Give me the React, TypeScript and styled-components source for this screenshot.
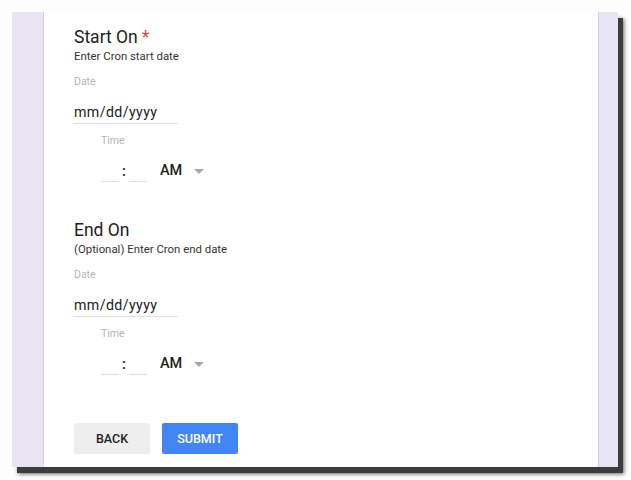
import React from "react";
import styled, { createGlobalStyle } from "styled-components";

const GlobalStyle = createGlobalStyle`
  body {
    margin: 0;
    background: #fdfdfd;
    font-family: Roboto, "Liberation Sans", Arial, sans-serif;
  }
`;

const Page = styled.div`
  min-height: 480px;
  box-sizing: border-box;
  padding: 12px 0 0 12px;
`;

const Frame = styled.div`
  width: 606px;
  height: 455px;
  box-sizing: border-box;
  padding: 0 19px 0 31px;
  background: #e9e4f4;
  box-shadow: 5px 6px 0 #3c3c3c, 6px 7px 4px rgba(0, 0, 0, 0.6);
  display: flex;
`;

const Card = styled.div`
  flex: 1;
  background: #ffffff;
  border-left: 1px solid #d3cddf;
  border-right: 1px solid #d3cddf;
  padding: 14px 0 0 30px;
  display: flex;
  flex-direction: column;
`;

const Section = styled.section<{ $first?: boolean }>`
  margin-top: ${(p) => (p.$first ? "0" : "37px")};
  display: flex;
  flex-direction: column;
  align-items: flex-start;
`;

const Title = styled.h2`
  margin: 0;
  font-size: 17.5px;
  line-height: 22px;
  font-weight: 400;
  color: #212121;
`;

const Required = styled.span`
  color: #db4437;
  margin-left: 4px;
`;

const Subtitle = styled.div`
  font-size: 11.4px;
  line-height: 16px;
  color: #333;
`;

const Label = styled.div<{ $indent?: boolean }>`
  margin-top: ${(p) => (p.$indent ? "10px" : "11px")};
  margin-left: ${(p) => (p.$indent ? "27px" : "0")};
  font-size: 10.5px;
  line-height: 14px;
  color: #b5b5b5;
`;

const DateField = styled.div`
  margin-top: 13px;
  width: 104px;
  font-size: 14.2px;
  line-height: 20px;
  color: #222;
  letter-spacing: 0.4px;
  padding-bottom: 1px;
  border-bottom: 1px solid #e0e0e0;
`;

const TimeRow = styled.div`
  margin-top: 13px;
  margin-left: 27px;
  display: flex;
  align-items: flex-start;
  height: 21px;
`;

const TimeBox = styled.div`
  width: 18px;
  height: 20px;
  border-bottom: 1px solid #e0e0e0;
`;

const Colon = styled.span`
  width: 10px;
  text-align: center;
  font-size: 15px;
  line-height: 20px;
  font-weight: 500;
  color: #222;
`;

const Meridiem = styled.span`
  margin-left: 13px;
  font-size: 14.5px;
  line-height: 20px;
  font-weight: 500;
  color: #222;
`;

const Caret = styled.span`
  margin-left: 12px;
  margin-top: 8px;
  width: 0;
  height: 0;
  border-left: 5px solid transparent;
  border-right: 5px solid transparent;
  border-top: 5px solid #a8a8a8;
`;

const Actions = styled.div`
  margin-top: 48px;
  display: flex;
  gap: 12px;
`;

const Button = styled.button<{ $primary?: boolean }>`
  width: 76px;
  height: 31px;
  border: none;
  border-radius: 2px;
  font-family: Roboto, "Liberation Sans", Arial, sans-serif;
  font-size: 12.5px;
  font-weight: 500;
  text-transform: uppercase;
  background: ${(p) => (p.$primary ? "#4285f4" : "#eeeeee")};
  color: ${(p) => (p.$primary ? "#ffffff" : "#222")};
  cursor: pointer;
`;

const DateTimeBlock = ({
  title,
  subtitle,
  required,
  first,
}: {
  title: string;
  subtitle: string;
  required?: boolean;
  first?: boolean;
}) => (
  <Section $first={first}>
    <Title>
      {title}
      {required && <Required>*</Required>}
    </Title>
    <Subtitle>{subtitle}</Subtitle>
    <Label>Date</Label>
    <DateField>mm/dd/yyyy</DateField>
    <Label $indent>Time</Label>
    <TimeRow>
      <TimeBox />
      <Colon>:</Colon>
      <TimeBox />
      <Meridiem>AM</Meridiem>
      <Caret />
    </TimeRow>
  </Section>
);

export default function App() {
  return (
    <>
      <GlobalStyle />
      <Page>
        <Frame>
          <Card>
            <DateTimeBlock first required title="Start On" subtitle="Enter Cron start date" />
            <DateTimeBlock title="End On" subtitle="(Optional) Enter Cron end date" />
            <Actions>
              <Button>Back</Button>
              <Button $primary>Submit</Button>
            </Actions>
          </Card>
        </Frame>
      </Page>
    </>
  );
}
